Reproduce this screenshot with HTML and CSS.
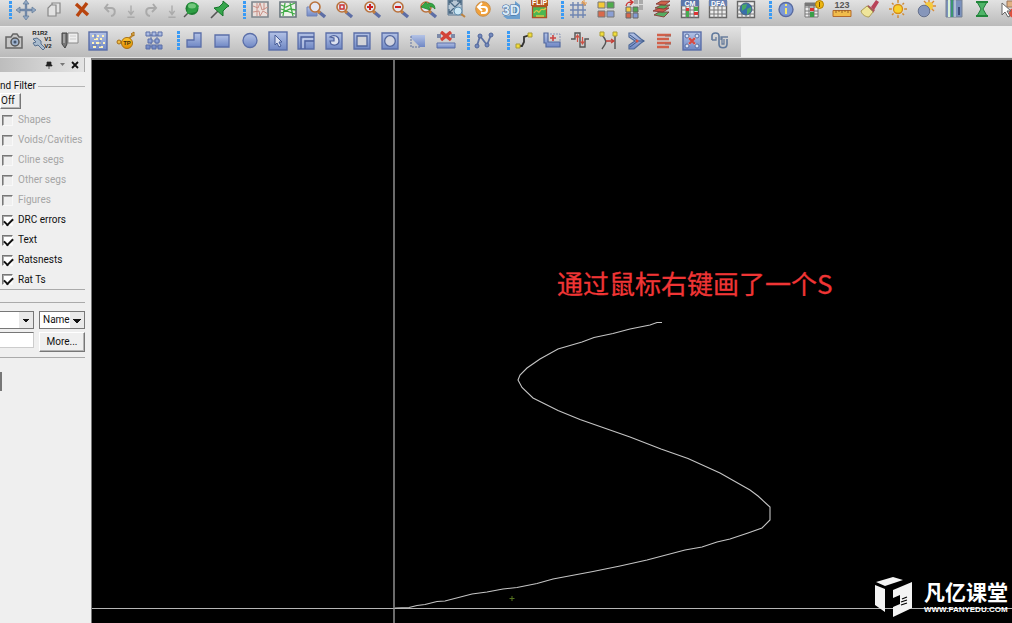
FILE: index.html
```
<!DOCTYPE html>
<html lang="en">
<head>
<meta charset="utf-8">
<title>PCB Editor</title>
<link rel="stylesheet" href="styles.css">
</head>
<body>
<svg class="defs" aria-hidden="true">
  <defs>
    <linearGradient id="blue" x1="0" y1="0" x2="0" y2="1"><stop offset="0" stop-color="#b4c3e6"/><stop offset="1" stop-color="#6f87c4"/></linearGradient>
    <linearGradient id="gold" x1="0" y1="0" x2="0" y2="1"><stop offset="0" stop-color="#ffc933"/><stop offset="1" stop-color="#e08a00"/></linearGradient>
    <symbol id="lens" viewBox="0 0 20 20"><path d="M12 12l6 5" stroke="#5d6ea5" stroke-width="3.4"/><path d="M11 11l2 2" stroke="#c9803b" stroke-width="3"/><circle cx="8" cy="7" r="5" fill="#e3e6f2" stroke="#b9713b" stroke-width="1.6"/></symbol>
    <symbol id="tile" viewBox="0 0 20 20"><rect x="1" y="1" width="18" height="18" fill="url(#blue)" stroke="#5a6ea8" stroke-width="1.4"/></symbol>
    <symbol id="sheet" viewBox="0 0 20 20"><path d="M1.500 1.500h17v16h-17z" fill="#eee" stroke="#666" stroke-width="1.400"/><path d="M1 6h18M1 10h18M1 14h18M6 5v13M10 5v13M14 5v13" stroke="#777"/></symbol>
  </defs>
</svg>
<div class="app">
  <header class="toolbars">
    <div class="toolbar toolbar-top">
      <span class="grip"></span>
      <button aria-label="Move"><svg viewBox="0 0 20 20"><path d="M10 2v16M2 10h16" stroke="#7188a8" stroke-width="2.400"/><path d="M10 0l3 4H7zM10 20l3-4H7zM0 10l4-3v6zM20 10l-4-3v6z" fill="#93a9c5" stroke="#5f7896" stroke-width=".7"/></svg></button>
      <button aria-label="Copy"><svg viewBox="0 0 20 20"><g fill="#e2e2e2" stroke="#888" stroke-width="1.200"><path d="M8 3h8v10H8z"/><path d="M7 5h5v11H4V8z"/></g></svg></button>
      <button aria-label="Delete"><svg viewBox="0 0 20 20"><path d="M4 4l12 11M15 3L5 16" stroke="#b8440e" stroke-width="3.400"/></svg></button>
      <button aria-label="Undo"><svg viewBox="0 0 20 20"><path d="M5 8h6c5 0 5 7 0 8M8 4L5 8l4 4" fill="none" stroke="#aaa" stroke-width="2"/></svg></button>
      <button class="slim" aria-label="Undo list"><svg viewBox="0 0 20 20"><path d="M10 5v9M7 11l3 4 3-4M6 18h8" fill="none" stroke="#aaa" stroke-width="1.500"/></svg></button>
      <button aria-label="Redo"><svg viewBox="0 0 20 20"><path d="M15 8H9c-5 0-5 7 0 8M12 4l3 4-4 4" fill="none" stroke="#aaa" stroke-width="2"/></svg></button>
      <button class="slim" aria-label="Redo list"><svg viewBox="0 0 20 20"><path d="M10 5v9M7 11l3 4 3-4M6 18h8" fill="none" stroke="#aaa" stroke-width="1.500"/></svg></button>
      <button aria-label="Pin"><svg viewBox="0 0 20 20"><path d="M2 17l5-5" stroke="#555" stroke-width="1.500"/><circle cx="10" cy="8.500" r="6.500" fill="#1f7d33"/><path d="M6 3h8l3 3-3 6-9 2z" fill="#2d9e43"/><ellipse cx="10" cy="6" rx="4" ry="2.500" fill="#72c77c"/></svg></button>
      <button aria-label="Fix"><svg viewBox="0 0 20 20"><path d="M1 18l7-7" stroke="#555" stroke-width="1.600"/><path d="M13 1l6 5-2 1-4 4v5L4 8l5-1 4-4z" fill="#36a64c" stroke="#16752b"/></svg></button>

      <span class="grip"></span>
      <button aria-label="Rats off"><svg viewBox="0 0 20 20"><path d="M2 2h16v15H2z" fill="#eadfdb" stroke="#7d858c" stroke-width="1.600"/><path d="M3 6l5 2 2-5 2 7 6-3M3 12l6-1 1 5 3-5 5 3M7 3v13M14 3v7" fill="none" stroke="#c98f87"/></svg></button>
      <button aria-label="Rats on"><svg viewBox="0 0 20 20"><path d="M2 2h16v15H2z" fill="#eef3eb" stroke="#68767d" stroke-width="1.600"/><path d="M3 5l5 2 9-4M7 3l-2 13M12 3l3 13M3 13l9-4 6 1M3 9l14 5" fill="none" stroke="#42ad48" stroke-width="1.300"/></svg></button>
      <button aria-label="Zoom window"><svg viewBox="0 0 20 20"><path d="M1 7h10v9H1z" fill="url(#blue)" stroke="#7182b6"/><use href="#lens" x="1" width="20" height="20"/></svg></button>
      <button aria-label="Zoom fit"><svg viewBox="0 0 20 20"><use href="#lens"/><path d="M6 5h4v4H6z" fill="none" stroke="#c33" stroke-width="1.500"/></svg></button>
      <button aria-label="Zoom in"><svg viewBox="0 0 20 20"><use href="#lens"/><path d="M5 7h6M8 4v6" stroke="#c22" stroke-width="2"/></svg></button>
      <button aria-label="Zoom out"><svg viewBox="0 0 20 20"><use href="#lens"/><path d="M5 7h6" stroke="#c22" stroke-width="2"/></svg></button>
      <button aria-label="Zoom previous"><svg viewBox="0 0 20 20"><use href="#lens"/><path d="M3 7l5-5 1 2c4-2 8 0 8 5-2-2-4-3-6-2l1 3z" fill="#35a644" stroke="#167c26" stroke-width=".7"/></svg></button>
      <button aria-label="Zoom world"><svg viewBox="0 0 20 20"><path d="M2 0h14v15H2z" fill="#b9c8d5" stroke="#5a7690"/><path d="M3 1l12 12M15 1L3 13M3 5V1h4M11 1h4v4M3 9v4h4" fill="none" stroke="#4a6882" stroke-width="1.300"/><path d="M14 13l5 4" stroke="#bd8340" stroke-width="2"/><circle cx="12" cy="11" r="4" fill="#cce8f5" stroke="#6590ae"/></svg></button>
      <button aria-label="Redraw"><svg viewBox="0 0 20 20"><circle cx="9" cy="9" r="7.300" fill="#f1a13b" stroke="#c9904f"/><path d="M5 7h5c4 0 4 6 0 6H7M8 3L4 7l4 4" fill="none" stroke="#fff" stroke-width="2"/></svg></button>
      <button aria-label="3D view"><svg viewBox="0 0 20 20"><path d="M13 1l5 4v14H5l-4-3 12-1z" fill="#6c9fce"/><text x="9" y="15" class="glyph glyph-3d">3D</text></svg></button>
      <button aria-label="Flip design"><svg viewBox="0 0 20 20"><path d="M1 0h17v6H1z" fill="#b5581c"/><text x="9.500" y="5" class="glyph glyph-flip">FLIP</text><path d="M2.500 6.500h14v11h-14z" fill="#4bb752" stroke="#ad4f22" stroke-width="1.300"/><path d="M4 13c4-6 4 2 6-2s3 1 6-3M6 16h8" fill="none" stroke="#d8c545" stroke-width="1.300"/></svg></button>

      <span class="grip grip-narrow"></span>
      <button aria-label="Grid"><svg viewBox="0 0 20 20"><path d="M2 5h16M2 10h16M2 15h16M5 2v16M10 2v16M15 2v16" stroke="#7086b3" stroke-width="1.400"/><path d="M16 0v6M13 3h6M14 1l4 4" stroke="#e6994a"/></svg></button>
      <button aria-label="Color"><svg viewBox="0 0 20 20"><g stroke="#777"><path d="M2 2h7v6H2z" fill="#f5c936"/><path d="M11 2h7v6h-7z" fill="#4fac4c"/><path d="M2 11h7v6H2z" fill="#d9694b"/><path d="M11 11h7v6h-7z" fill="#8b9fd4"/></g></svg></button>
      <button aria-label="Shadow colors"><svg viewBox="0 0 20 20"><path d="M10 0h4v4h-4zM15 0h4v4h-4zM15 5h4v5h-4z" fill="#aaa"/><path d="M2 6c1-4 3-4 6-4M6 0l3 2-3 3" fill="none" stroke="#c33" stroke-width="1.300"/><g stroke="#666"><path d="M2 7h5v5H2z" fill="#f4cc40"/><path d="M9 7h5v5H9z" fill="#4da750"/><path d="M2 13h5v5H2z" fill="#d6654c"/><path d="M9 13h5v5H9z" fill="#829ad5"/></g></svg></button>
      <button aria-label="Layers"><svg viewBox="0 0 20 20"><g stroke="#853b35" stroke-width=".9"><path d="M2 15l5-3h10l-5 5z" fill="#55ad61"/><path d="M1 11l6-3h10l-6 4z" fill="#d25748"/><path d="M3 8l6-3h9l-6 4z" fill="#50aa5e"/><path d="M4 4l5-3h9l-5 4z" fill="#ce624b"/></g></svg></button>
      <button aria-label="Constraint manager"><svg viewBox="0 0 20 20"><use href="#sheet"/><path d="M1 0h18v6H1z" fill="#5b76a9"/><text x="10" y="6" class="glyph glyph-flip">CM</text><path d="M6 8h3v3H6zM14 12h4v3h-4z" fill="#d33"/><path d="M6 11h3v6H6zM14 7h4v4h-4z" fill="#47aa50"/></svg></button>
      <button aria-label="DFA table"><svg viewBox="0 0 20 20"><use href="#sheet"/><path d="M1 0h18v6H1z" fill="#6780b2"/><text x="10" y="6" class="glyph glyph-flip">DFA</text></svg></button>
      <button aria-label="Web report"><svg viewBox="0 0 20 20"><use href="#sheet"/><circle cx="10" cy="9" r="6" fill="#376faa" stroke="#496381"/><path d="M6 5l5-1-1 4-4 3zM11 9l4-2v4l-4 4z" fill="#48a865"/></svg></button>

      <span class="grip"></span>
      <button aria-label="Info"><svg viewBox="0 0 20 20"><circle cx="10" cy="9.500" r="7" fill="#7e9ad6" stroke="#596ba0" stroke-width="1.400"/><path d="M10 8v6M10 4v2" stroke="#f5e86b" stroke-width="2"/></svg></button>
      <button aria-label="Report"><svg viewBox="0 0 20 20"><path d="M1 3h13v14H1z" fill="#eee" stroke="#777"/><path d="M1 7h13M1 11h13M1 14h13M5 3v14M10 3v14" stroke="#777"/><path d="M1 3h13v3H1z" fill="#777"/><path d="M6 8h4v3H6z" fill="#d33"/><path d="M6 12h4v5H6z" fill="#3a9e48"/><circle cx="15.500" cy="4.500" r="4" fill="#ecb613" stroke="#b68100"/><path d="M15.500 2v5" stroke="#765400"/></svg></button>
      <button aria-label="Measure"><svg viewBox="0 0 20 20"><text x="10" y="8" class="glyph glyph-123">123</text><path d="M1 10.500h18v6H1z" fill="#f1bc4b" stroke="#b36a2b"/><path d="M4 10v3M7 10v2M10 10v3M13 10v2M16 10v3" stroke="#975f24"/></svg></button>
      <button aria-label="Highlight"><svg viewBox="0 0 20 20"><path d="M11 7l5-7 3 2-5 8z" fill="#b84359"/><path d="M8 5l7 5-2 3-7-5z" fill="#a8575a"/><path d="M7 6l6 6-4 5c-3 0-7-2-8-6z" fill="#efe59a" stroke="#aa9b57"/></svg></button>
      <button aria-label="Sun"><svg viewBox="0 0 20 20"><path d="M10 0v18M1 9h18M4 3l12 12M16 3L4 15" stroke="#cf8c38" stroke-width="1.500"/><circle cx="10" cy="9" r="6.200" fill="#d8d8d8"/><circle cx="10" cy="9" r="4.500" fill="#f9d12c" stroke="#d58b19" stroke-width="1.300"/></svg></button>
      <button aria-label="Dim"><svg viewBox="0 0 20 20"><path d="M13 0v13M7 6h13M8 1l10 10M18 1L8 11" stroke="#d98c37" stroke-width="1.400"/><circle cx="13" cy="6" r="4" fill="#f6cb3e"/><circle cx="8" cy="11" r="5.800" fill="#8696ba" stroke="#65718d"/></svg></button>
      <button aria-label="Cross section"><svg viewBox="0 0 20 20"><path d="M2 0h16v17H2z" fill="#7b91bd" stroke="#768194"/><path d="M5 0v17" stroke="#d8f0d6" stroke-width="2"/><path d="M8 0v17" stroke="#3c956d" stroke-width="2"/><path d="M11 0v17" stroke="#e5eee9"/><path d="M15 7v8" stroke="#40517e" stroke-width="2"/></svg></button>
      <button aria-label="Timing"><svg viewBox="0 0 20 20"><path d="M5 2h10l-4 7 4 7H5l4-7z" fill="#4fb568" stroke="#237c3c"/><path d="M4 2h12M4 16h12" stroke="#21863a" stroke-width="2"/></svg></button>
      <button aria-label="Select"><svg viewBox="0 0 20 20"><path d="M7 1h13v6H7z" fill="#dfb081" stroke="#9a755a"/><circle cx="14" cy="13" r="5" fill="#de4f3d"/><path d="M2 3v12l3-3 3 5 2-1-3-5h4z" fill="#fff" stroke="#666"/></svg></button>
    </div>

    <div class="toolbar toolbar-bottom">
      <button aria-label="Snapshot"><svg viewBox="0 0 20 20"><path d="M2 6h5l2-3h4l2 3h3v11H2z" fill="#c7c7c7" stroke="#666" stroke-width="1.500"/><circle cx="11" cy="11" r="4" fill="#9fb2cc" stroke="#555" stroke-width="1.500"/><circle cx="11" cy="11" r="1.500" fill="#44566f"/></svg></button>
      <button aria-label="Rename references"><svg viewBox="0 0 20 20"><text x="8" y="4" class="glyph glyph-ref">R1R2</text><text x="16" y="10" class="glyph glyph-ref">V1</text><text x="16" y="17" class="glyph glyph-ref">V2</text><path d="M1 8l4-1 4 3v3l4 4-2 2-5-5-3 1-2-3 3-1z" fill="#a9bbcd" stroke="#57708f"/></svg></button>
      <button aria-label="Documentation"><svg viewBox="0 0 20 20"><path d="M8 2h10v10H8z" fill="#eee" stroke="#888"/><path d="M2 2h5v11l-2 4-3-4z" fill="#777" stroke="#444"/><path d="M4 3v9M10 5h6M10 8h6" stroke="#ccc"/></svg></button>
      <button aria-label="Place grid"><svg viewBox="0 0 20 20"><use href="#tile"/><path d="M4 5h2M9 5h2M14 5h2M6 8h4M12 8h2M4 12h2M8 12h5M15 12h2M5 16h3M11 16h4" stroke="#fff2b9" stroke-width="2"/><path d="M7 3v5M12 9v7M4 14h5" stroke="#627bb5"/></svg></button>
      <button aria-label="Test point"><svg viewBox="0 0 20 20"><path d="M3 11h6l8-7" fill="none" stroke="#bd852a" stroke-width="2"/><circle cx="3" cy="11" r="2" fill="#efbd45" stroke="#a86d16"/><path d="M15 3l3-2v4z" fill="#eac35a" stroke="#a86d16"/><circle cx="11" cy="12" r="5.500" fill="url(#gold)" stroke="#a77013"/><text x="11" y="14" class="glyph glyph-tp">TP</text></svg></button>
      <button aria-label="Components"><svg viewBox="0 0 20 20"><path d="M4 4h12M4 10h12M4 16h12M7 4v12M13 4v12" stroke="#566eaa"/><g fill="url(#blue)" stroke="#5a6ea8"><path d="M2 1h4v4H2zM8 1h4v4H8zM14 1h4v4h-4zM4 8h4v4H4zM11 8h4v4h-4zM2 14h4v4H2zM8 14h4v4H8zM14 14h4v4h-4z"/></g></svg></button>

      <span class="grip"></span>
      <button aria-label="Polygon"><svg viewBox="0 0 20 20"><path d="M10 2h7v14H3V9h7z" fill="url(#blue)" stroke="#5a6ea8" stroke-width="1.300"/></svg></button>
      <button aria-label="Rectangle"><svg viewBox="0 0 20 20"><path d="M3 4h14v12H3z" fill="url(#blue)" stroke="#5a6ea8" stroke-width="1.300"/></svg></button>
      <button aria-label="Circle"><svg viewBox="0 0 20 20"><circle cx="10" cy="9.500" r="7" fill="url(#blue)" stroke="#5a6ea8" stroke-width="1.300"/></svg></button>
      <button aria-label="Select shape"><svg viewBox="0 0 20 20"><use href="#tile"/><path d="M7 4v10l2-2 2 4 2-1-2-4h3z" fill="#dbe1f1" stroke="#455b97"/></svg></button>
      <button aria-label="Void element"><svg viewBox="0 0 20 20"><path d="M2 2h16v16H2z" fill="url(#blue)" stroke="#5a6ea8" stroke-width="1.300"/><path d="M5 18V6h13M9 18v-8h9" fill="none" stroke="#4d619d" stroke-width="1.300"/><path d="M7 17V8h10" fill="none" stroke="#d8dfef"/></svg></button>
      <button aria-label="Void polygon"><svg viewBox="0 0 20 20"><path d="M2 2h16v16H2z" fill="url(#blue)" stroke="#5a6ea8" stroke-width="1.300"/><path d="M6 6c4-3 9-1 9 4 0 4-5 5-8 3l-1-3h4V7z" fill="#dce2ef" stroke="#4d619d" stroke-width="1.200"/></svg></button>
      <button aria-label="Void rectangle"><svg viewBox="0 0 20 20"><path d="M2 2h16v16H2z" fill="url(#blue)" stroke="#5a6ea8" stroke-width="1.300"/><path d="M5 5h10v10H5z" fill="#d2d3d7" stroke="#53679d" stroke-width="1.300"/></svg></button>
      <button aria-label="Void circle"><svg viewBox="0 0 20 20"><path d="M2 2h16v16H2z" fill="url(#blue)" stroke="#5a6ea8" stroke-width="1.300"/><circle cx="10" cy="10" r="5.300" fill="#d3d5df" stroke="#53679d" stroke-width="1.300"/></svg></button>
      <button aria-label="Island"><svg viewBox="0 0 20 20"><path d="M3 4h14v12H12L3 7z" fill="url(#blue)"/><path d="M3 5v11h9" fill="none" stroke="#60739f" stroke-dasharray="2 1"/></svg></button>
      <button aria-label="Delete islands"><svg viewBox="0 0 20 20"><path d="M1 3h4v4H1zM15 3h4v4h-4z" fill="#7d8aa8"/><path d="M5 1l10 8M15 1L5 9" stroke="#d24338" stroke-width="3.400"/><path d="M1 12h18v5H1z" fill="url(#blue)" stroke="#5a6ea8"/></svg></button>

      <span class="grip grip-narrow"></span>
      <button aria-label="Add connect"><svg viewBox="0 0 20 20"><path d="M3 15L6 5l7 9 4-10" fill="none" stroke="#6074a5" stroke-width="1.800"/><g fill="#7389bd" stroke="#52679b"><circle cx="3" cy="15" r="2"/><circle cx="6" cy="5" r="2"/><circle cx="13" cy="14" r="2"/><circle cx="17" cy="4" r="2"/></g></svg></button>

      <span class="grip"></span>
      <button aria-label="Slide"><svg viewBox="0 0 20 20"><path d="M4 15h4l2-4V6l6-2" fill="none" stroke="#333" stroke-width="1.800"/><path d="M2 13h4v4H2zM14 2h4v4h-4z" fill="#f2db3a" stroke="#a79b37"/></svg></button>
      <button aria-label="Delay tune"><svg viewBox="0 0 20 20"><path d="M2 2v10h2v4h14v-5H6V2z" fill="url(#blue)" stroke="#53699f" stroke-width="1.200"/><path d="M8 3h10v7" fill="none" stroke="#8997ba" stroke-dasharray="2 1"/><path d="M11 4v6M8 7h6" stroke="#c44" stroke-width="1.600"/></svg></button>
      <button aria-label="Phase tune"><svg viewBox="0 0 20 20"><path d="M1 8h4V2h5v14h5V8h4" fill="none" stroke="#555" stroke-width="1.400"/><path d="M7.500 5v6M5.500 7l2-3 2 3M12.500 6v6M10.500 10l2 3 2-3" fill="none" stroke="#d05245" stroke-width="1.200"/></svg></button>
      <button aria-label="Spread lines"><svg viewBox="0 0 20 20"><path d="M4 4c6 7 4 8 0 14M17 3v15" fill="none" stroke="#555" stroke-width="1.400"/><path d="M8 10h8M13 8l3 2-3 2" fill="none" stroke="#c43f37" stroke-width="1.300"/><path d="M2 1h4v4H2zM15 1h4v4h-4z" fill="#f2df3b" stroke="#aa9d38"/></svg></button>
      <button aria-label="Gloss"><svg viewBox="0 0 20 20"><path d="M3 2h5l7 6 3 2-3 2-7 6H3v-4l6-4-6-4z" fill="url(#blue)" stroke="#506b99" stroke-width="1.200"/><path d="M4 4l8 6-8 6M12 10h6" fill="none" stroke="#3c5985"/><circle cx="11" cy="10" r="1.500" fill="#d35343"/></svg></button>
      <button aria-label="Align"><svg viewBox="0 0 20 20"><path d="M3 4h14M3 8h12M3 12h14M3 16h12" stroke="#d1604a" stroke-width="2.500"/><path d="M11 5h6M11 13h6" stroke="#8e6b67"/></svg></button>
      <button aria-label="Fanout"><svg viewBox="0 0 20 20"><use href="#tile"/><path d="M4 4l12 12M16 4L4 16" stroke="#e7ebf4" stroke-width="2"/><g fill="#dce3f4" stroke="#566da3"><circle cx="5" cy="5" r="2"/><circle cx="15" cy="5" r="2"/><circle cx="5" cy="15" r="2"/><circle cx="15" cy="15" r="2"/></g><path d="M7 7l6 6M13 7l-6 6" stroke="#d44a45" stroke-width="2.400"/></svg></button>
      <button aria-label="Tune"><svg viewBox="0 0 20 20"><path d="M2 9V5c0-4 7-4 7 0v8c0 5 8 5 8 0V8" fill="none" stroke="#60799c" stroke-width="1.600"/><path d="M2 9h4V6M11 9V6h7M12 6v7h2V8" fill="none" stroke="#6b7f9d" stroke-width="1.300"/></svg></button>
    </div>
  </header>

  <div class="workspace">
    <aside class="panel">
      <div class="panel-bar">
        <button aria-label="Auto hide"><svg viewBox="0 0 8 8"><path d="M2 1h4v3h1v1H1V4h1zM4 5v3" fill="#222" stroke="#222" stroke-width=".7"/></svg></button>
        <button aria-label="Menu"><svg viewBox="0 0 8 8"><path d="M2 2h5L4.500 5z" fill="#777"/></svg></button>
        <button aria-label="Close"><svg viewBox="0 0 8 8"><path d="M1 1l6 6M7 1L1 7" stroke="#111" stroke-width="1.800"/></svg></button>
      </div>
      <fieldset class="filter">
        <legend>nd Filter</legend>
        <button class="raised off">Off</button>
        <label><input type="checkbox" disabled>Shapes</label>
        <label><input type="checkbox" disabled>Voids/Cavities</label>
        <label><input type="checkbox" disabled>Cline segs</label>
        <label><input type="checkbox" disabled>Other segs</label>
        <label><input type="checkbox" disabled>Figures</label>
        <label><input type="checkbox" checked>DRC errors</label>
        <label><input type="checkbox" checked>Text</label>
        <label><input type="checkbox" checked>Ratsnests</label>
        <label><input type="checkbox" checked>Rat Ts</label>
      </fieldset>
      <section class="find">
        <select class="find-type" aria-label="Object type"><option></option></select>
        <select class="find-by" aria-label="Find by"><option>Name</option></select>
        <input class="find-text" type="text" aria-label="Find text">
        <button class="raised">More...</button>
      </section>
      <button class="raised stub" aria-label="Expand"></button>
    </aside>

    <main class="canvas">
      <svg class="drawing">
        <path d="M0 548.500H4000" stroke="#b5b5b5" stroke-width="1"/>
        <path d="M302 0V4000" stroke="#9a9a9a" stroke-width="1.400"/>
        <g transform="translate(-92 -60)">
          <polyline fill="none" stroke="#c4c4c4" stroke-width="1.100" points="662,322.500 657,322.500 650,325 630,329 613,333.500 594,337.500 582,342 558,349 540,359 527,368 520,375 518,380 522,387.500 533,398 545,404 558,410.500 580,419.500 600,426.500 630,437 661,449 688,458.500 720,473 750,490 758,496 770,507 770,520 762,528 748,533 730,539 717,542 702,547 685,550 647,560 620,566 593,571.500 553,579 537,583.500 517,587.500 503,589 487,592 472,594 445,601 437,601.500 425,604.500 417,605.500 409,607.500 395,608"/>
          <path d="M512 596v5M509.500 598.500h5" stroke="#55731f"/>
          <text class="note" x="557" y="294">通过鼠标右键画了一个S</text>
        </g>
      </svg>
      <div class="brand">
        <svg viewBox="0 0 38 40"><path d="M1 5L18 0l10 3L10 9zM0 8l10 4v23L0 28zM18 13L37 5v26L18 40V30l7-3v-9l-7 3z" fill="#f4f4f4"/><path d="M27 22l5-2M26 25l6-2M26 28l6-2" stroke="#000" stroke-width="1.200"/></svg>
        <div class="brand-words"><span class="brand-name">凡亿课堂</span><span class="brand-url">WWW.FANYEDU.COM</span></div>
      </div>
    </main>
  </div>
</div>
</body>
</html>
```
FILE: styles.css
```
* { box-sizing: border-box; }
html, body { height: 100%; margin: 0; }
body { background: #efefef; font: 10px/12px Roboto, "Liberation Sans", sans-serif; color: #111; overflow: hidden; }
button { font: inherit; color: inherit; border: 0; padding: 0; background: none; }
.defs { position: absolute; width: 0; height: 0; }
.app { display: flex; flex-direction: column; height: 100vh; }

.toolbars { display: flex; flex-direction: column; align-items: flex-start; border-bottom: 1px solid #e2e2e2; }
.toolbar { display: flex; flex: none; overflow: hidden; background: linear-gradient(#e2e2e2, #bababa); }
.toolbar-top { align-self: stretch; height: 26px; padding-bottom: 6px; }
.toolbar-bottom { height: 31px; padding: 0 7px 2px 0; border-top: 1px solid #ececec; }
.toolbar button { display: flex; flex: none; width: 28px; align-items: center; justify-content: center; }
.toolbar .slim { width: 13px; }
.toolbar svg { flex: none; width: 20px; height: 20px; }
.toolbar .slim svg { width: 18px; }
.grip { flex: none; width: 12px; margin: 1px 0; background: repeating-linear-gradient(#3a9bf5 0 3px, transparent 3px 4px) right / 3px 100% no-repeat; }
.toolbar-bottom .grip { margin: 4px 0; }
.grip-narrow { width: 10px; }
.glyph { font-family: "Liberation Sans", sans-serif; font-weight: bold; text-anchor: middle; }
.glyph-3d { font-size: 14px; fill: #dcecfa; stroke: #35679a; stroke-width: 1px; paint-order: stroke; }
.glyph-flip { font-size: 7px; fill: #fff; }
.glyph-123 { font-size: 9px; fill: #555; }
.glyph-ref { font-size: 6px; fill: #222; }
.glyph-tp { font-size: 6px; fill: #4b3206; }

.workspace { display: flex; flex: 1; min-height: 0; }
.panel { flex: none; width: 91px; padding-right: 6px; overflow: hidden; }
.panel-bar { display: flex; align-items: center; justify-content: flex-end; gap: 5px; height: 14px; padding-right: 5px; background: linear-gradient(90deg, #bdbdbd, #e4e4e4); border-right: 1px solid #aaa; }
.panel-bar button { display: flex; width: 8px; }
.panel-bar svg { width: 8px; height: 8px; }
.filter { margin: 8px 0 12px; padding: 0; border: 0; border-bottom: 1px solid #aaa; display: flex; flex-direction: column; }
.filter legend { display: flex; align-items: center; width: 100%; padding: 0; }
.filter legend::after { content: ""; flex: 1; height: 1px; margin-left: 2px; background: #b5b5b5; }
.raised { background: #efefef; border: 1px solid; border-color: #fff #777 #777 #fff; box-shadow: inset -1px -1px #b5b5b5; }
.off { width: 21px; height: 16px; margin: 1px 0; padding-right: 7px; text-align: right; }
.filter label { display: flex; align-items: center; gap: 5px; height: 20px; padding-left: 2px; white-space: nowrap; }
.filter label:has(:disabled) { color: #a5a5a5; }
.filter label:last-child { height: 19px; }
.filter input { appearance: none; flex: none; width: 11px; height: 11px; margin: 0; border: 1px solid; border-color: #777 #f8f8f8 #f8f8f8 #777; box-shadow: inset 1px 1px #aaa; }
.filter input:checked { background: #fff; }
.filter input:checked::after { content: ""; display: block; width: 7px; height: 4px; margin: 2px 0 0 1px; border: solid #111; border-width: 0 0 2px 2px; transform: rotate(-45deg); }

.find { display: grid; grid-template-columns: 34px 1fr; gap: 3px 5px; padding: 8px 0 5px; border: solid #aaa; border-width: 1px 0; }
.find select, .find input { appearance: none; width: 100%; height: 18px; margin: 0; padding: 0 3px; border: 1px solid #777; border-radius: 0; font: inherit; color: #111; background: #fff; }
.find select {
  background:
    linear-gradient(to top right, transparent 50%, #111 50%) right 7px top 7px / 4px 4px no-repeat,
    linear-gradient(to top left, transparent 50%, #111 50%) right 3px top 7px / 4px 4px no-repeat,
    linear-gradient(#e9e9e9, #e9e9e9) right / 14px 100% no-repeat,
    #fff;
}
.find .find-type { border-left: 0; }
.find .find-text { height: 16px; border-color: #777 #ccc #ccc; border-left: 0; }
.find .raised { height: 20px; }
.stub { display: block; width: 2px; height: 19px; margin-top: 14px; border-color: #777; }

.canvas { position: relative; flex: 1; min-width: 0; background: #000; border: solid #777; border-width: 2px 0 0 1px; overflow: hidden; }
.drawing { display: block; width: 100%; height: 100%; }
.note { font: 26px "Noto Sans CJK SC", sans-serif; fill: #f03535; stroke: #f03535; stroke-width: .3px; }
.brand { position: absolute; right: 4px; bottom: 6px; display: flex; gap: 11px; color: #fff; }
.brand > svg { width: 38px; height: 40px; }
.brand-words { display: flex; flex-direction: column; justify-content: space-between; padding: 2px 0 3px; }
.brand-name { font: bold 21px/24px "Noto Sans CJK SC", sans-serif; }
.brand-url { font: bold 8px/8px "Liberation Sans", sans-serif; }
```
